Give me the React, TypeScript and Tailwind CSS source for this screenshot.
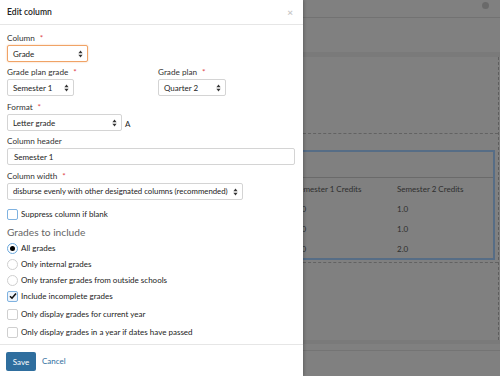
import React from "react";

function Arrows() {
  return (
    <svg width="5" height="8" viewBox="0 0 5 8" className="shrink-0">
      <path d="M2.5 0.5 L4.6 3.2 H0.4 Z" fill="#333" />
      <path d="M2.5 7.5 L4.6 4.8 H0.4 Z" fill="#333" />
    </svg>
  );
}

function Label({ text, req }: { text: string; req?: boolean }) {
  return (
    <div className="h-[12px] leading-[12px] text-[8.2px] text-[#333]">
      {text}
      {req && <span className="ml-[5px] text-[#e0474c]">*</span>}
    </div>
  );
}

function Select({ value, w, focus, small }: { value: string; w: string; focus?: boolean; small?: boolean }) {
  return (
    <div
      className={`${w} h-[17px] mt-[1px] flex items-center justify-between pl-[5px] pr-[4px] rounded-[2px] bg-white ${
        small ? "text-[7.8px]" : "text-[8px]"
      } text-[#222] whitespace-nowrap border ${
        focus ? "border-[#f0a366] shadow-[0_0_2px_#f6c79f]" : "border-[#d4d4d4]"
      }`}
    >
      <span>{value}</span>
      <Arrows />
    </div>
  );
}

function Check({ label, checked, focus }: { label: string; checked?: boolean; focus?: boolean }) {
  return (
    <div className="flex items-center h-[16px] gap-[3px] text-[8px] text-[#222]">
      <div
        className={`w-[11px] h-[11px] rounded-[2px] border flex items-center justify-center ${
          focus || checked ? "border-[#7fb2e0]" : "border-[#cfcfcf]"
        } ${checked ? "bg-[#eef4fb]" : "bg-white"}`}
      >
        {checked && (
          <svg width="8" height="8" viewBox="0 0 8 8">
            <path d="M1 4.2 L3 6.2 L7 1.6" stroke="#111" strokeWidth="1.6" fill="none" />
          </svg>
        )}
      </div>
      <span>{label}</span>
    </div>
  );
}

function Radio({ label, on }: { label: string; on?: boolean }) {
  return (
    <div className="flex items-center h-[16px] gap-[3px] text-[8px] text-[#222]">
      <div
        className={`w-[11px] h-[11px] rounded-full border flex items-center justify-center bg-white ${
          on ? "border-[#6aa8dd]" : "border-[#cfcfcf]"
        }`}
      >
        {on && <div className="w-[5px] h-[5px] rounded-full bg-black" />}
      </div>
      <span>{label}</span>
    </div>
  );
}

export default function App() {
  return (
    <div className="flex w-[500px] h-[376px] overflow-hidden font-['Lato',sans-serif]">
      <div className="w-[303px] shrink-0 h-full bg-white flex flex-col relative z-10 shadow-[1px_0_3px_rgba(0,0,0,0.25)]">
        <div className="h-[25px] shrink-0 flex items-center justify-between px-[7px] border-b border-[#e6e6e6]">
          <span className="text-[8.6px] font-semibold text-[#222]">Edit column</span>
          <span className="text-[10px] font-bold text-[#c8c8c8] mr-[3px]">×</span>
        </div>

        <div className="flex-1 px-[7px] pt-[7px]">
          <Label text="Column" req />
          <Select value="Grade" w="w-[81px]" focus />

          <div className="flex mt-[4px]">
            <div className="w-[151px]">
              <Label text="Grade plan grade" req />
              <Select value="Semester 1" w="w-[67px]" />
            </div>
            <div>
              <Label text="Grade plan" req />
              <Select value="Quarter 2" w="w-[68px]" />
            </div>
          </div>

          <div className="mt-[5px]">
            <Label text="Format" req />
            <div className="flex items-end gap-[3px]">
              <Select value="Letter grade" w="w-[115px]" />
              <span className="text-[8px] text-[#222] leading-[14px]">A</span>
            </div>
          </div>

          <div className="mt-[4px]">
            <Label text="Column header" />
            <div className="w-[288px] h-[17px] mt-[1px] flex items-center pl-[6px] rounded-[2px] border border-[#d4d4d4] text-[8px] text-[#222]">
              Semester 1
            </div>
          </div>

          <div className="mt-[5px]">
            <Label text="Column width" req />
            <Select value="disburse evenly with other designated columns (recommended)" w="w-[236px]" small />
          </div>

          <div className="mt-[6px]">
            <Check label="Suppress column if blank" focus />
          </div>

          <div className="mt-[3px] h-[15px] leading-[15px] text-[10.2px] text-[#666]">Grades to include</div>

          <Radio label="All grades" on />
          <Radio label="Only internal grades" />
          <Radio label="Only transfer grades from outside schools" />

          <div className="flex flex-col gap-[2px]">
            <Check label="Include incomplete grades" checked />
            <Check label="Only display grades for current year" />
            <Check label="Only display grades in a year if dates have passed" />
          </div>
        </div>

        <div className="h-[32px] shrink-0 border-t border-[#e6e6e6] flex items-start gap-[6px] px-[6px] pt-[7px]">
          <button className="h-[19px] w-[30px] rounded-[2px] bg-[#2f6e9e] text-white text-[8px]">Save</button>
          <span className="text-[8px] text-[#2f6e9e] leading-[19px]">Cancel</span>
        </div>
      </div>

      {/* page behind the modal, dimmed */}
      <div className="flex-1 h-full bg-[#808080] flex flex-col text-[8px] text-[#2e2e2e]">
        <div className="h-[18px] shrink-0 border-b border-[#727272] flex justify-end items-start pt-[2px] pr-[11px]">
          <div className="w-[7px] h-[7px] rounded-full bg-[#6a6a6a]" />
        </div>
        <div className="h-[34px] shrink-0" />
        <div className="h-[5px] shrink-0 bg-[#7a7a7a]" />
        <div className="h-[283px] shrink-0 border-r border-dashed border-[#5e5e5e] mr-[1px] flex flex-col overflow-hidden">
          <div className="h-[77px] shrink-0 border-b border-dashed border-[#626262]" />
          <div className="mt-[16px] mr-[3px] shrink-0 border-2 border-l-0 border-[#566d86] flex flex-col">
            <div className="h-[26px] shrink-0 border-b border-[#6a6a6a]" />
            <div className="flex h-[21px] shrink-0 items-center">
              <span className="w-[102px] shrink-0 -ml-[8px]">Semester 1 Credits</span>
              <span>Semester 2 Credits</span>
            </div>
            <div className="flex h-[20px] shrink-0 items-center">
              <span className="w-[102px] shrink-0 -ml-[8px]">1.0</span>
              <span>1.0</span>
            </div>
            <div className="flex h-[20px] shrink-0 items-center">
              <span className="w-[102px] shrink-0 -ml-[8px]">1.0</span>
              <span>1.0</span>
            </div>
            <div className="flex h-[19px] shrink-0 items-center">
              <span className="w-[102px] shrink-0 -ml-[8px]">2.0</span>
              <span>2.0</span>
            </div>
          </div>
          <div className="mt-[2px] border-b border-dashed border-[#626262]" />
        </div>
        <div className="h-[4px] shrink-0 bg-[#7a7a7a]" />
        <div className="h-[7px] shrink-0 border-b border-[#747474]" />
      </div>
    </div>
  );
}
